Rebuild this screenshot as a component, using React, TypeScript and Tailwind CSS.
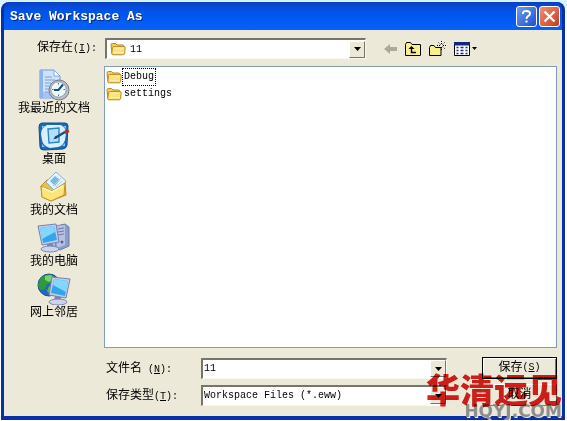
import type { ReactNode } from "react";

const cjk = "font-['Liberation_Mono','Noto_Sans_CJK_SC',monospace]";

function Folder() {
    return (
        <svg width="16" height="16" viewBox="0 0 16 16" className="shrink-0">
            <path d="M1 4q0-1.500 1.500-1.500h3l1.500 1.500h5.500q1.500 0 1.500 1.500v7.500h-12z" fill="#f2cf58" stroke="#b58a1c" />
            <path d="M2.500 6.500q.3-.9 1.200-.9h10.300q1.300 0 1.200 1.200l-.5 5.400q-.3 1.600-1.600 1.600h-10q-1.500 0-1.300-1.400z" fill="#fbe37c" stroke="#b88c20" />
            <path d="M4 11.500h10M4.500 7h9" stroke="#fff8c8" opacity=".7" />
        </svg>
    );
}

function Arrow() {
    return (
        <svg width="7" height="4" viewBox="0 0 7 4">
            <path d="M0 0h7L3.500 4z" fill="#000" />
        </svg>
    );
}

function RecentIcon() {
    return (
        <svg width="32" height="32" viewBox="0 0 32 32">
            <path d="M2 1h14l6 6v22H2z" fill="#cfe2fd" stroke="#6f97da" />
            <path d="M2 1h3v28H2z" fill="#8db3f0" />
            <path d="M5 23h12v6H5z" fill="#a4c4f5" />
            <path d="M16 1v6h6z" fill="#fff" stroke="#86a6dc" />
            <path d="M7 8h7M7 11h10M7 14h6M7 17h4M7 20h4M7 23h5" stroke="#7ba0dc" strokeWidth="1.200" />
            <circle cx="21" cy="21" r="10" fill="#b9c0c6" stroke="#747d86" />
            <circle cx="20.500" cy="20.500" r="7.700" fill="#eef9fd" stroke="#8e9dab" />
            <path d="M20.500 14v1.500M20.500 25.500V27M14 20.500h1.500M25.500 20.500H27" stroke="#4b708c" />
            <path d="M25 15.500L20.500 21H16" fill="none" stroke="#124f85" strokeWidth="2" />
        </svg>
    );
}

function DesktopIcon() {
    return (
        <svg width="32" height="32" viewBox="0 0 32 32">
            <path d="M4 3h23q3 0 3 3l-1 19q-.2 3-4 4l-19 1q-4 0-4-3L1 7q0-4 3-4z" fill="#1e68b4" stroke="#174f8c" />
            <path d="M9 5h14q5 3 5 8l-1 7q-2 6-7 7l-8 1q-7-2-8-8l-1-6q0-6 6-9z" fill="#d8f1ff" />
            <path d="M4 6h3L4 9zM25 6h3v3zM4 24v3h3zM27 23v3h-3z" fill="#7fc7f5" />
            <path d="M10 9l11-1v14l-10 1z" fill="#b4e0fa" stroke="#2c87c9" strokeWidth="1.400" />
            <path d="M17 18l10-6" stroke="#1e4f84" strokeWidth="2.500" />
            <path d="M15 19.500l4-1.500-1-2z" fill="#173458" />
            <path d="M26 11l4-2 1.500 3-4 2z" fill="#a73535" />
        </svg>
    );
}

function DocumentsIcon() {
    return (
        <svg width="32" height="32" viewBox="0 0 32 32">
            <path d="M3 15l6-6 18 2 1 13-15 6-9-4z" fill="#e9bf46" stroke="#bd8d22" />
            <path d="M8 11L18 1l10 9-9 12z" fill="#e4f4fc" stroke="#85b5d8" />
            <path d="M12 10l5-5 5 4-5 6z" fill="#78b9e8" />
            <path d="M15 15l8-8M18 16l6-6" stroke="#b2d1e5" />
            <path d="M3 15l11 5 13-8-1 12-13 6-9-4z" fill="#fbe57a" stroke="#c4962a" />
            <path d="M5 17l9 4 11-6" fill="none" stroke="#fffac6" strokeWidth="1.500" />
        </svg>
    );
}

function Monitor() {
    return (
        <>
            <path d="M10 21l6-1 1 6-7 1z" fill="#7988b4" />
            <ellipse cx="13" cy="27" rx="9" ry="3" fill="#ccd4eb" stroke="#7888b5" />
            <path d="M1 4l18-2 3 18-17 3z" fill="#c3cdea" stroke="#7383b2" />
            <path d="M3 6l14-2 3 14-14 3z" fill="#35a4ec" />
            <path d="M3 6l14-2 1 6-13 7z" fill="#84d6fc" />
        </>
    );
}

function ComputerIcon() {
    return (
        <svg width="34" height="32" viewBox="0 0 34 32">
            <path d="M19 4l9-2 4 3v19l-9 4-5-4z" fill="#8e9cc8" stroke="#6b7cae" />
            <path d="M19 4l9-1v20l-8 3z" fill="#b6c2e2" />
            <path d="M21 7l6-1M21 10l6-1M21 13l6-1" stroke="#6b7cae" />
            <circle cx="25" cy="20" r="1.500" fill="#55649b" />
            <Monitor />
        </svg>
    );
}

function NetworkIcon() {
    return (
        <svg width="34" height="32" viewBox="0 0 34 32">
            <circle cx="12" cy="12" r="11" fill="#2268bd" stroke="#174d92" />
            <path d="M3 6q6-7 14-3l-2 6-5 2-2 5-5 1-2-5z" fill="#2f9a3c" />
            <path d="M8 3l6-1 3 4-5 3-4-2z" fill="#7ad26c" />
            <path d="M12 13l6 1 1 5-5 3-4-4z" fill="#54bd51" />
            <g transform="translate(34 2) scale(-1 1)">
                <Monitor />
            </g>
        </svg>
    );
}

function Latin({ children }: { children: ReactNode }) {
    return <span className="text-[10px]">{children}</span>;
}

const places = [
    { name: "我最近的文档", icon: <RecentIcon /> },
    { name: "桌面", icon: <DesktopIcon /> },
    { name: "我的文档", icon: <DocumentsIcon /> },
    { name: "我的电脑", icon: <ComputerIcon /> },
    { name: "网上邻居", icon: <NetworkIcon /> },
];

const sunken = "border border-t-2 border-l-2 border-[#f8f7f1] border-t-[#77756a] border-l-[#77756a] bg-white";
const raised = "flex items-center justify-center border border-[#77756a] border-t-white border-l-white bg-[#ece9d8]";
const pushButton = "flex h-[22px] w-[75px] shrink-0 items-center justify-center bg-[#ece9d8] text-[12px] leading-4";

function TitleBar() {
    return (
        <header className="flex h-7 items-center rounded-t-[7px] bg-linear-to-b from-[#0a3fc4] via-[#0054e9] via-35% to-[#0662fc] pr-[2px] pl-[6px]">
            <h1 className="flex-1 pt-[2px] text-[13px] leading-4 font-bold text-white [text-shadow:1px_1px_#0a2a80]">
                Save Workspace As
            </h1>
            <div className="flex gap-[2px]">
                <button aria-label="Help" className="flex h-[21px] w-[21px] items-center justify-center rounded-[3px] border border-white bg-linear-to-br from-[#6f9bf0] to-[#1b50cc]">
                    <svg width="13" height="15" viewBox="0 0 13 15" fill="none" stroke="#fff" strokeWidth="2">
                        <path d="M3 5V4q0-2 3.500-2T10 4.500q0 1.500-2 2.700Q6.500 8 6.500 10M6.500 11.500v2" />
                    </svg>
                </button>
                <button aria-label="Close" className="flex h-[21px] w-[21px] items-center justify-center rounded-[3px] border border-white bg-linear-to-br from-[#ee8e70] to-[#c83a12]">
                    <svg width="13" height="13" viewBox="0 0 13 13" stroke="#fff" strokeWidth="2.200">
                        <path d="M1.500 1.500l10 10M11.500 1.500l-10 10" />
                    </svg>
                </button>
            </div>
        </header>
    );
}

function Toolbar() {
    return (
        <div className="flex w-[191px] shrink-0 items-center gap-2 pl-[18px]">
            <button aria-label="Back">
                <svg width="13" height="12" viewBox="0 0 13 12">
                    <path d="M0 6l6-5v3h7v4H6v3z" fill="#aaa99c" />
                </svg>
            </button>
            <button aria-label="Up one level">
                <svg width="16" height="14" viewBox="0 0 16 14">
                    <path d="M.5 13.500v-11l1-2h4l1.500 2h8.500v11z" fill="#f8f08a" stroke="#000" />
                    <path d="M6.500 5v5.500H11" fill="none" stroke="#000" strokeWidth="1.400" />
                    <path d="M3.500 7L6.500 4l3 3z" />
                </svg>
            </button>
            <button aria-label="New folder">
                <svg width="17" height="16" viewBox="0 0 17 16">
                    <path d="M.5 14.500V6.500l1-2h3.500l1.500 2h5.500v8z" fill="#f8f08a" stroke="#000" />
                    <path d="M12.500 0v3M12.500 6v3M8 4.500h3M14 4.500h3M9.500 1.500l2 2M13.500 5.500l2.500 2.500M15.500 1.500l-2 2" stroke="#000" strokeDasharray="1 1" />
                </svg>
            </button>
            <button aria-label="View menu" className="flex items-center gap-[2px]">
                <svg width="16" height="14" viewBox="0 0 16 14">
                    <path d="M.5.5h15v13H.5z" fill="#fff" stroke="#000" />
                    <path d="M0 0h16v3.500H0z" fill="#16257c" />
                    <path d="M2.500 5.500h2M6.500 5.500h3M11.500 5.500h2M2.500 8.500h2M6.500 8.500h3M11.500 8.500h2M2.500 11.500h2M6.500 11.500h3M11.500 11.500h2" stroke="#222b70" strokeWidth="1.500" />
                </svg>
                <svg width="5" height="3" viewBox="0 0 5 3">
                    <path d="M0 0h5L2.500 3z" />
                </svg>
            </button>
        </div>
    );
}

function Places() {
    return (
        <nav className="flex w-[100px] shrink-0 flex-col pt-[3px]">
            {places.map((place) => (
                <button key={place.name} className="flex h-[51px] flex-col items-center text-[12px] leading-4 whitespace-nowrap">
                    <span className="h-8">{place.icon}</span>
                    {place.name}
                </button>
            ))}
        </nav>
    );
}

function Watermark() {
    return (
        <div className="pointer-events-none absolute right-0 -bottom-[2px] flex flex-col items-end">
            <span className="font-['Noto_Sans_CJK_SC',sans-serif] text-[34px] leading-[30px] font-black text-[#d9221c] mix-blend-multiply">
                华清远见
            </span>
            <span className="font-['DejaVu_Sans',sans-serif] text-[17px] leading-[14px] font-bold text-[#8e8e8e] [text-shadow:1px_1px_#ece9d8]">
                HQYJ.COM
            </span>
        </div>
    );
}

export default function App() {
    return (
        <div className={`bg-linear-to-b from-[#d5f3fb] to-white to-5% pt-[2px] pr-[2px] pl-[1px] text-black ${cjk}`}>
            <div className="relative rounded-t-[8px] border-x-[3px] border-b-4 border-[#0831a8] bg-[#0831a8]">
                <TitleBar />
                <main className="bg-[#ece9d8] pt-2 pr-[5px] pb-[10px]">
                    <div className="flex h-[21px] items-center">
                        <label htmlFor="look-in" className="w-[101px] shrink-0 pl-[33px] text-[12px] leading-4 whitespace-nowrap">
                            保存在<Latin>(<u>I</u>):</Latin>
                        </label>
                        <div className={`relative flex h-[21px] min-w-0 flex-1 items-center pl-[3px] ${sunken}`}>
                            <Folder />
                            <select id="look-in" className="h-full min-w-0 flex-1 appearance-none pl-1 text-[10px] outline-none">
                                <option>11</option>
                            </select>
                            <span className={`pointer-events-none h-[17px] w-4 ${raised}`}>
                                <Arrow />
                            </span>
                        </div>
                        <Toolbar />
                    </div>

                    <div className="mt-[7px] flex">
                        <Places />
                        <div className="min-w-0 flex-1">
                            <ul className="flex min-h-[282px] flex-col border border-[#7f9db9] bg-white pt-[1px] pl-[1px] text-[10px] leading-4">
                                <li className="flex h-[17px] items-center">
                                    <Folder />
                                    <span className="border border-dotted border-black px-[1px]">Debug</span>
                                </li>
                                <li className="flex h-[17px] items-center">
                                    <Folder />
                                    <span className="px-[2px]">settings</span>
                                </li>
                            </ul>

                            <div className="mt-[9px] flex h-[22px] items-center">
                                <label htmlFor="file-name" className="w-[97px] shrink-0 pt-[2px] pl-[2px] text-[12px] leading-4">
                                    文件名<Latin> (<u>N</u>):</Latin>
                                </label>
                                <div className={`mr-[35px] flex h-[21px] min-w-0 flex-1 items-center ${sunken}`}>
                                    <input id="file-name" defaultValue="11" className="h-full min-w-0 flex-1 pl-[1px] text-[10px] outline-none" />
                                    <button aria-label="Recent names" className={`h-[17px] w-4 ${raised}`}>
                                        <Arrow />
                                    </button>
                                </div>
                                <button className={`${pushButton} border border-black shadow-[inset_1px_1px_#fff,inset_-1px_-1px_#77756a]`}>
                                    保存<Latin>(<u>S</u>)</Latin>
                                </button>
                            </div>

                            <div className="mt-[5px] flex h-[22px] items-center">
                                <label htmlFor="file-type" className="w-[97px] shrink-0 pt-[2px] pl-[2px] text-[12px] leading-4 whitespace-nowrap">
                                    保存类型<Latin>(<u>T</u>):</Latin>
                                </label>
                                <div className={`mr-[35px] flex h-[21px] min-w-0 flex-1 items-center ${sunken}`}>
                                    <select id="file-type" className="h-full min-w-0 flex-1 appearance-none pl-[1px] text-[10px] outline-none">
                                        <option>Workspace Files (*.eww)</option>
                                    </select>
                                    <span className={`pointer-events-none h-[17px] w-4 ${raised}`}>
                                        <Arrow />
                                    </span>
                                </div>
                                <button className={`${pushButton} border border-[#77756a] border-t-white border-l-white`}>取消</button>
                            </div>
                        </div>
                    </div>
                </main>
                <Watermark />
            </div>
        </div>
    );
}
